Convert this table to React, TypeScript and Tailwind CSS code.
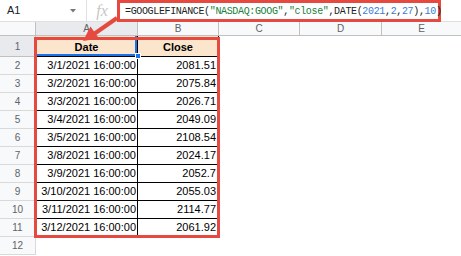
import React from "react";

const rows = [
  ["3/1/2021 16:00:00", "2081.51"],
  ["3/2/2021 16:00:00", "2075.84"],
  ["3/3/2021 16:00:00", "2026.71"],
  ["3/4/2021 16:00:00", "2049.09"],
  ["3/5/2021 16:00:00", "2108.54"],
  ["3/8/2021 16:00:00", "2024.17"],
  ["3/9/2021 16:00:00", "2052.7"],
  ["3/10/2021 16:00:00", "2055.03"],
  ["3/11/2021 16:00:00", "2114.77"],
  ["3/12/2021 16:00:00", "2061.92"],
];

function TopBar() {
  return (
    <div className="flex items-start h-[22px] border-b border-[#e0e0e0]">
      <div className="flex items-center w-[87px] h-[21px] pl-[7px] pr-[10px] border-r border-[#e0e0e0]">
        <span className="text-[11px] text-[#202124]">A1</span>
        <svg width="6" height="4" viewBox="0 0 6 4" className="ml-auto">
          <polygon points="0,0 6,0 3,3.5" fill="#777" />
        </svg>
      </div>
      <div className="w-[30px] h-[21px] flex items-center justify-center font-['Liberation_Serif',serif] italic text-[16px] text-[#c6c6c6]">
        fx
      </div>
      <div className="w-[324px] h-[22px] border-[3px] border-[#e5493f] bg-white flex items-center pl-[5px] font-['Liberation_Mono',monospace] text-[10px] tracking-[-0.35px] text-[#222] whitespace-nowrap">
        <span>=GOOGLEFINANCE(</span>
        <span className="text-[#188038]">"NASDAQ:GOOG"</span>
        <span>,</span>
        <span className="text-[#188038]">"close"</span>
        <span>,DATE(</span>
        <span className="text-[#3a7bd5]">2021</span>
        <span>,</span>
        <span className="text-[#3a7bd5]">2</span>
        <span>,</span>
        <span className="text-[#3a7bd5]">27</span>
        <span>),</span>
        <span className="text-[#3a7bd5]">10</span>
        <span>)</span>
      </div>
    </div>
  );
}

function ColumnHeaders() {
  return (
    <div className="flex h-[14px] bg-[#f8f9fa] border-b border-[#c0c0c0] text-[10px] text-[#5f6368]">
      <div className="w-[36px] border-r border-[#c0c0c0]" />
      <div className="w-[102px] flex items-center justify-center border-r border-[#c0c0c0] bg-[#e8eaed]">A</div>
      <div className="w-[81px] flex items-center justify-center border-r border-[#c0c0c0]">B</div>
      <div className="w-[81px] flex items-center justify-center border-r border-[#c0c0c0]">C</div>
      <div className="w-[82px] flex items-center justify-center border-r border-[#c0c0c0]">D</div>
      <div className="flex-1 flex items-center justify-center">E</div>
    </div>
  );
}

const RowNum = ({ n, active }: { n: number; active?: boolean }) => (
  <div
    className={
      active
        ? "w-[36px] shrink-0 flex items-center justify-center bg-[#e8eaed] border-r border-b border-[#c0c0c0] text-[10px] text-[#5f6368]"
        : "w-[36px] shrink-0 flex items-center justify-center bg-[#f8f9fa] border-r border-b border-[#d9d9d9] text-[10px] text-[#5f6368]"
    }
  >
    {n}
  </div>
);

function Sheet() {
  return (
    <div className="flex flex-col text-[11px] text-black">
      <div className="flex h-[21px]">
        <RowNum n={1} active />
        <div className="relative w-[102px] flex items-center justify-center pt-[3px] bg-[#fce5cd] border-r border-b border-black font-bold">
          Date
          <div className="absolute inset-0 border-r-2 border-b-2 border-[#1a73e8]" />
          <div className="absolute left-[99px] top-[17px] w-[6px] h-[6px] bg-[#1a73e8] border border-white" />
        </div>
        <div className="w-[81px] flex items-center justify-center pt-[3px] bg-[#fce5cd] border-r border-b border-black font-bold">
          Close
        </div>
      </div>
      {rows.map(([date, close], i) => (
        <div key={date} className="flex h-[18px]">
          <RowNum n={i + 2} />
          <div className="w-[102px] flex items-center justify-end pr-[1px] border-r border-b border-black">
            {date}
          </div>
          <div className="w-[81px] flex items-center justify-end pr-[2px] border-r border-b border-black">
            {close}
          </div>
        </div>
      ))}
      <div className="flex h-[18px] bg-white">
        <div className="w-[36px] shrink-0 flex items-center justify-center bg-[#f8f9fa] border-r border-b border-[#d9d9d9] text-[10px] text-[#5f6368]">
          12
        </div>
        <div className="flex-1 h-[18px] bg-white" />
      </div>
    </div>
  );
}

export default function App() {
  return (
    <div className="relative w-[461px] h-[256px] overflow-hidden bg-white font-['Liberation_Sans',Arial,sans-serif]">
      <TopBar />
      <ColumnHeaders />
      <Sheet />
      <div className="absolute left-[34px] top-[37px] w-[186px] h-[201px] border-[3px] border-[#e5493f] z-10 pointer-events-none" />
      <svg
        className="absolute left-0 top-0 z-20 pointer-events-none"
        width="461"
        height="256"
        viewBox="0 0 461 256"
      >
        <line x1="117" y1="18" x2="94" y2="34" stroke="#e5493f" strokeWidth="4" />
        <polygon points="83,41 90.5,26.5 99,38.5" fill="#e5493f" />
      </svg>
    </div>
  );
}
